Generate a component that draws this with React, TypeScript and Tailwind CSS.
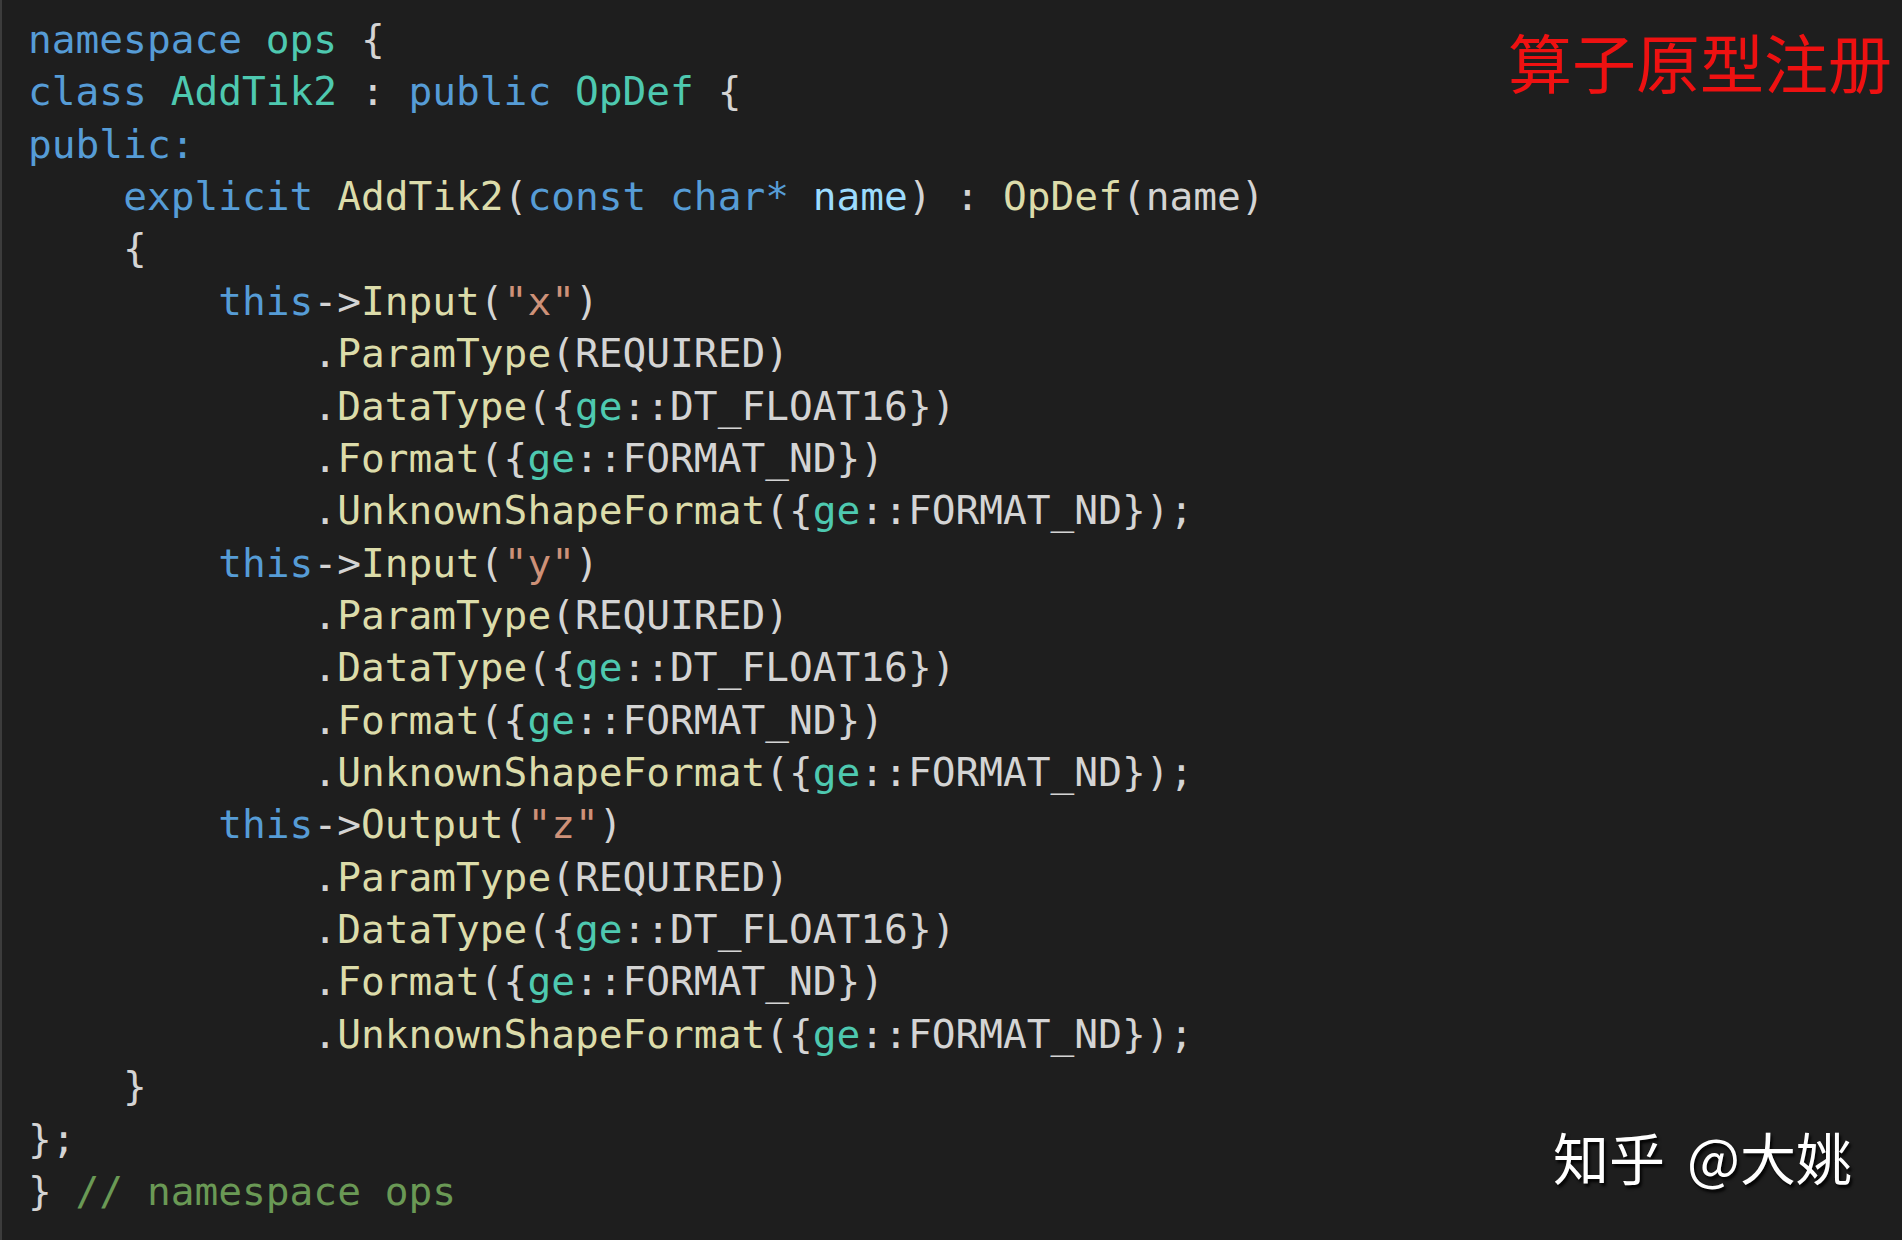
import React from "react";

type Tok = [string, string];

const K = "text-[#569cd6]";
const T = "text-[#4ec9b0]";
const F = "text-[#dcdcaa]";
const S = "text-[#ce9178]";
const P = "text-[#9cdcfe]";
const W = "text-[#d4d4d4]";
const C = "text-[#6a9955]";

const chain = (): Tok[][] => [
  [[W, "            ."], [F, "ParamType"], [W, "(REQUIRED)"]],
  [[W, "            ."], [F, "DataType"], [W, "({"], [T, "ge"], [W, "::DT_FLOAT16})"]],
  [[W, "            ."], [F, "Format"], [W, "({"], [T, "ge"], [W, "::FORMAT_ND})"]],
  [[W, "            ."], [F, "UnknownShapeFormat"], [W, "({"], [T, "ge"], [W, "::FORMAT_ND});"]],
];

const lines: Tok[][] = [
  [[K, "namespace"], [W, " "], [T, "ops"], [W, " {"]],
  [[K, "class"], [W, " "], [T, "AddTik2"], [W, " : "], [K, "public"], [W, " "], [T, "OpDef"], [W, " {"]],
  [[K, "public:"]],
  [[W, "    "], [K, "explicit"], [W, " "], [F, "AddTik2"], [W, "("], [K, "const"], [W, " "], [K, "char*"], [W, " "], [P, "name"], [W, ") : "], [F, "OpDef"], [W, "(name)"]],
  [[W, "    {"]],
  [[W, "        "], [K, "this"], [W, "->"], [F, "Input"], [W, "("], [S, "\"x\""], [W, ")"]],
  ...chain(),
  [[W, "        "], [K, "this"], [W, "->"], [F, "Input"], [W, "("], [S, "\"y\""], [W, ")"]],
  ...chain(),
  [[W, "        "], [K, "this"], [W, "->"], [F, "Output"], [W, "("], [S, "\"z\""], [W, ")"]],
  ...chain(),
  [[W, "    }"]],
  [[W, "};"]],
  [[W, "} "], [C, "// namespace ops"]],
];

export default function App() {
  return (
    <div className="relative w-[1902px] h-[1240px] overflow-hidden bg-[#1e1e1e] border-l-2 border-[#3c3c3c]">
      <div
        className="pl-[26px] pt-[13px] whitespace-pre text-[39.5px] leading-[52.36px]"
        style={{ fontFamily: '"DejaVu Sans Mono", "Liberation Mono", monospace' }}
      >
        {lines.map((ln, i) => (
          <div key={i} className="h-[52.36px]">
            {ln.map(([cls, txt], j) => (
              <span key={j} className={cls}>
                {txt}
              </span>
            ))}
          </div>
        ))}
      </div>
      <div
        className="absolute right-[10px] top-[28px] text-[64px] leading-[64px] text-[#ee1111]"
        style={{ fontFamily: '"Noto Sans CJK SC", "Noto Sans", sans-serif' }}
      >
        算子原型注册
      </div>
      <div
        className="absolute right-[50px] top-[1126px] flex gap-[22px] text-[56px] leading-[60px] font-normal text-white [text-shadow:2px_3px_3px_rgba(0,0,0,0.9)]"
        style={{ fontFamily: '"Noto Sans CJK SC", "Noto Sans", sans-serif' }}
      >
        <span>知乎</span>
        <span>@大姚</span>
      </div>
    </div>
  );
}
